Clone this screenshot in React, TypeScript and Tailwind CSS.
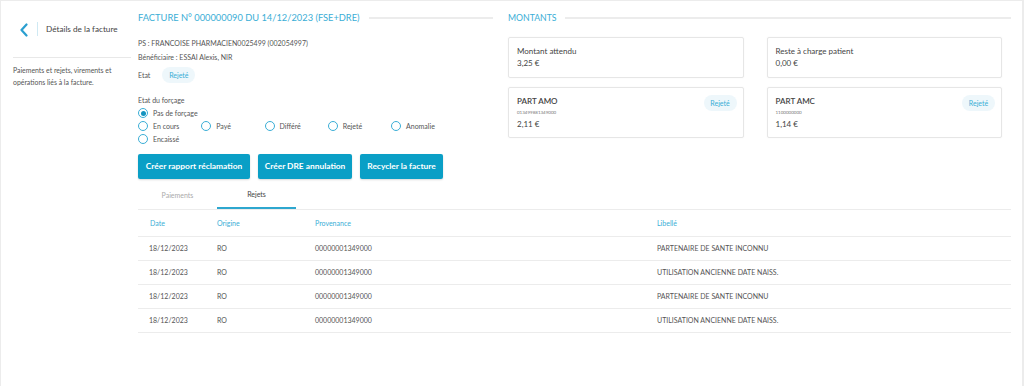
import React from "react";

const BLUE = "text-[#3aaed6]";

function Radio({ label, checked }: { label: string; checked?: boolean }) {
  return (
    <div className="flex items-center gap-[5px] w-[63.25px] h-[10px]">
      <span className="w-[10px] h-[10px] rounded-full border border-[#3aaed6] flex items-center justify-center shrink-0 bg-white">
        {checked && <span className="w-[5px] h-[5px] rounded-full bg-[#1594c0]" />}
      </span>
      <span className="text-[7px] leading-[10px] text-[#555]">{label}</span>
    </div>
  );
}

function Badge() {
  return (
    <span className="flex items-center justify-center h-[16px] w-[33px] rounded-full bg-[#eef7fb] text-[7px] leading-[10px] text-[#3aaed6]">
      Rejeté
    </span>
  );
}

function Card({ title, sub, value, badge }: { title: string; sub?: string; value: string; badge?: boolean }) {
  return (
    <div className="relative flex-1 border border-[#e6e6e6] rounded-[2px] bg-white shadow-[0_0_2px_rgba(0,0,0,0.04)] px-[8px] pt-[8px] flex flex-col">
      <span className={sub ? "text-[8px] leading-[10px] font-semibold text-[#444]" : "text-[8px] leading-[10px] text-[#444]"}>{title}</span>
      {sub && <span className="text-[4.5px] leading-[6px] text-[#777] mt-[4px]">{sub}</span>}
      <span className={sub ? "text-[8px] leading-[10px] text-[#444] mt-[3px]" : "text-[8px] leading-[10px] text-[#444] mt-[2px]"}>{value}</span>
      {badge && (
        <div className="absolute top-[7px] right-[6px] flex">
          <Badge />
        </div>
      )}
    </div>
  );
}

const rows = [
  ["18/12/2023", "RO", "00000001349000", "PARTENAIRE DE SANTE INCONNU"],
  ["18/12/2023", "RO", "00000001349000", "UTILISATION ANCIENNE DATE NAISS."],
  ["18/12/2023", "RO", "00000001349000", "PARTENAIRE DE SANTE INCONNU"],
  ["18/12/2023", "RO", "00000001349000", "UTILISATION ANCIENNE DATE NAISS."],
];

export default function App() {
  return (
    <div
      className="w-[1024px] h-[386px] bg-white border-t border-l border-[#ececec] flex overflow-hidden"
      style={{ fontFamily: "Lato, 'Open Sans', sans-serif" }}
    >
      {/* Sidebar */}
      <div className="w-[130px] shrink-0 pl-[12px]">
        <div className="flex items-center h-[57px] border-b border-[#e8e8e8]">
          <svg width="10" height="14" viewBox="0 0 10 14" className="ml-[6px] mt-[1px]">
            <path d="M7.5 1.5 L2.5 7 L7.5 12.5" fill="none" stroke="#2a9fd0" strokeWidth="2.2" strokeLinecap="round" strokeLinejoin="round" />
          </svg>
          <span className="w-px h-[14px] bg-[#cfe9f3] ml-[8px]" />
          <span className="text-[8.2px] text-[#444] ml-[8px]">Détails de la facture</span>
        </div>
        <p className="text-[6.9px] leading-[12px] text-[#555] mt-[6px]">
          Paiements et rejets, virements et opérations liés à la facture.
        </p>
      </div>

      {/* Main */}
      <div className="flex-1 pl-[7px] pr-[11px] flex flex-col">
        <div className="flex gap-[15px]">
          {/* Left column */}
          <div className="w-[355px] shrink-0">
            <div className="flex items-center h-[33px] gap-[9px]">
              <span className={`text-[9.3px] ${BLUE}`}>FACTURE N° 000000090 DU 14/12/2023 (FSE+DRE)</span>
              <span className="flex-1 h-[2px] bg-[#ececec]" />
            </div>
            <div className="text-[7px] leading-[10px] text-[#555] mt-[4px]">PS : FRANCOISE PHARMACIEN0025499 (002054997)</div>
            <div className="text-[7px] leading-[10px] text-[#555] mt-[4px]">Bénéficiaire : ESSAI Alexis, NIR</div>
            <div className="flex items-center mt-[5px] gap-[12px]">
              <span className="text-[7px] text-[#555]">Etat</span>
              <Badge />
            </div>
            <div className="text-[7px] leading-[10px] text-[#555] mt-[12px]">Etat du forçage</div>
            <div className="flex flex-col gap-[3px] mt-[3px]">
              <Radio label="Pas de forçage" checked />
              <div className="flex">
                <Radio label="En cours" />
                <Radio label="Payé" />
                <Radio label="Différé" />
                <Radio label="Rejeté" />
                <Radio label="Anomalie" />
              </div>
              <Radio label="Encaissé" />
            </div>
            <div className="flex gap-[8px] mt-[10px]">
              {[
                ["Créer rapport réclamation", "w-[112px]"],
                ["Créer DRE annulation", "w-[94px]"],
                ["Recycler la facture", "w-[83px]"],
              ].map(([t, w]) => (
                <button
                  key={t}
                  className={`${w} h-[25px] rounded-[2px] bg-[#0a9fc6] text-white text-[8.4px] font-bold shadow-[0_1px_2px_rgba(0,0,0,0.15)] whitespace-nowrap`}
                >
                  {t}
                </button>
              ))}
            </div>
          </div>

          {/* Right column */}
          <div className="flex-1">
            <div className="flex items-center h-[33px] gap-[8px]">
              <span className={`text-[8.7px] ${BLUE}`}>MONTANTS</span>
              <span className="flex-1 h-[2px] bg-[#ececec]" />
            </div>
            <div className="grid grid-cols-2 gap-x-[23px] gap-y-[9px] mt-[3px] pr-[9px]">
              <div className="flex h-[41px]"><Card title="Montant attendu" value="3,25 €" /></div>
              <div className="flex h-[41px]"><Card title="Reste à charge patient" value="0,00 €" /></div>
              <div className="flex h-[51px]"><Card title="PART AMO" sub="013499881349000" value="2,11 €" badge /></div>
              <div className="flex h-[51px]"><Card title="PART AMC" sub="1100000000" value="1,14 €" badge /></div>
            </div>
          </div>
        </div>

        {/* Tabs */}
        <div className="flex mt-[3px] border-b border-[#ececec]">
          <div className="w-[79px] h-[27px] flex items-center justify-center text-[7px] text-[#aaa]">Paiements</div>
          <div className="w-[79px] h-[27px] flex items-center justify-center text-[7px] text-[#444] border-b-2 border-[#2ea7cf]">Rejets</div>
        </div>

        {/* Table */}
        <div className="flex flex-col">
          <div className="flex h-[27px] items-center border-b border-[#ececec] text-[7px] text-[#3aaed6]">
            <span className="w-[79px] pl-[12px]">Date</span>
            <span className="w-[98px]">Origine</span>
            <span className="w-[342px]">Provenance</span>
            <span>Libellé</span>
          </div>
          {rows.map((r, i) => (
            <div key={i} className="flex h-[24px] items-center border-b border-[#ececec] text-[7px] text-[#555]">
              <span className="w-[79px] pl-[11px]">{r[0]}</span>
              <span className="w-[98px]">{r[1]}</span>
              <span className="w-[342px]">{r[2]}</span>
              <span>{r[3]}</span>
            </div>
          ))}
        </div>
      </div>
      <div className="w-[2px] bg-[#ececec] shrink-0" />
    </div>
  );
}
